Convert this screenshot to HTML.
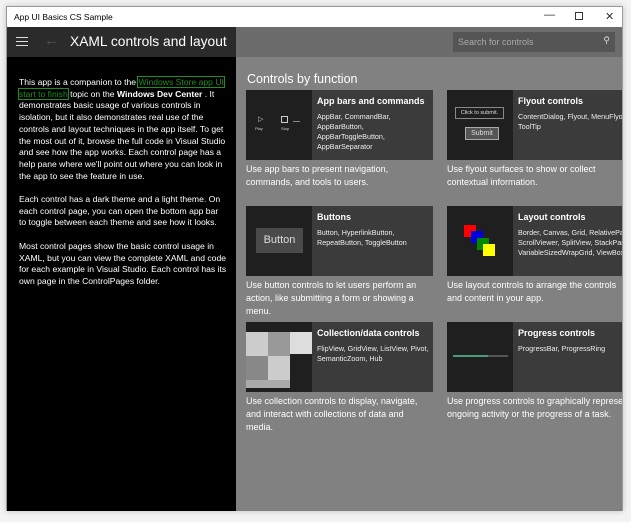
<!DOCTYPE html>
<html><head><style>
*{margin:0;padding:0;box-sizing:border-box}
body{width:631px;height:522px;background:#f3f3f3;font-family:"Liberation Sans",sans-serif;position:relative;overflow:hidden}
.win{position:absolute;left:6px;top:6px;width:617px;height:505px;border:1px solid #9a9a9a;background:#fff;box-shadow:0 0 6px rgba(0,0,0,.2)}
.title{position:absolute;left:7px;top:5px;font-size:8.5px;color:#000}
.cap{position:absolute;top:8px;font-size:11px;color:#333}
.left{position:absolute;left:0;top:20px;width:229px;height:484px;background:#000;overflow:hidden}
.lhead{position:absolute;left:0;top:0;width:229px;height:30px;background:#2b2b2b}
.right{position:absolute;left:229px;top:20px;width:386px;height:484px;background:#818181;overflow:hidden}
.rhead{position:absolute;left:0;top:0;width:386px;height:30px;background:#6c6c6c}
.search{position:absolute;left:217px;top:5px;width:162px;height:20px;background:#555;color:#aaa;font-size:9px;padding:5px 5px}
.ptxt{position:absolute;left:12px;color:#fff;font-size:8.6px;line-height:11.7px;white-space:nowrap}
.tile{position:absolute;height:70px;background:#3b3b3b;overflow:hidden}
.timg{position:absolute;left:0;top:0;width:66px;height:70px;background:#1f1f1f}
.tt{position:absolute;left:71px;top:6px;color:#fff;font-size:9px;font-weight:bold;white-space:nowrap}
.ts{position:absolute;left:71px;top:22px;color:#eee;font-size:7.2px;line-height:10px;white-space:nowrap}
.desc{position:absolute;color:#fff;font-size:9px;line-height:13px;white-space:nowrap}
</style></head><body>
<div class="win">
<div class="title">App UI Basics CS Sample</div>
<div class="cap" style="left:537px;top:2px">&#8212;</div>
<div class="cap" style="left:568px;top:5px;width:8px;height:8px;border:1px solid #333"></div>
<div class="cap" style="left:598px;top:3px">&#10005;</div>
<div class="left">
 <div class="lhead">
  <div style="position:absolute;left:9px;top:10px;width:12px;height:1px;background:#ddd;box-shadow:0 4px 0 #ddd,0 8px 0 #ddd"></div>
  <div style="position:absolute;left:37px;top:5px;color:#555;font-size:15px">&#8592;</div>
  <div style="position:absolute;left:63px;top:7px;color:#fff;font-size:13.8px;white-space:nowrap">XAML controls and layout</div>
 </div>
 <div class="ptxt" style="top:50px">This app is a companion to the <span style="color:#1f8f1f;outline:1px solid #1f8f1f">Windows Store app UI</span><br><span style="color:#1f8f1f;outline:1px solid #1f8f1f">start to finish</span> topic on the <b>Windows Dev Center</b> . It<br>demonstrates basic usage of various controls in<br>isolation, but it also demonstrates real use of the<br>controls and layout techniques in the app itself. To get<br>the most out of it, browse the full code in Visual Studio<br>and see how the app works. Each control page has a<br>help pane where we'll point out where you can look in<br>the app to see the feature in use.</div>
 <div class="ptxt" style="top:167px">Each control has a dark theme and a light theme. On<br>each control page, you can open the bottom app bar<br>to toggle between each theme and see how it looks.</div>
 <div class="ptxt" style="top:214px">Most control pages show the basic control usage in<br>XAML, but you can view the complete XAML and code<br>for each example in Visual Studio. Each control has its<br>own page in the ControlPages folder.</div>
</div>
<div class="right">
 <div class="rhead"><div class="search">Search for controls<span style="position:absolute;right:5px;top:3px;color:#ddd">&#9906;</span></div></div>
 <div style="position:absolute;left:11px;top:45px;color:#fff;font-size:12.5px">Controls by function</div>

 <div class="tile" style="left:10px;top:63px;width:187px"><div class="timg">
  <div style="position:absolute;left:12px;top:25px;color:#ccc;font-size:7px">&#9655;</div><div style="position:absolute;left:9px;top:36px;color:#ccc;font-size:4px">Play</div>
  <div style="position:absolute;left:35px;top:26px;width:7px;height:7px;border:1px solid #ccc"></div><div style="position:absolute;left:35px;top:36px;color:#ccc;font-size:4px">Stop</div>
  <div style="position:absolute;left:47px;top:31px;width:7px;height:1px;background:#888"></div></div>
  <div class="tt">App bars and commands</div><div class="ts">AppBar, CommandBar,<br>AppBarButton,<br>AppBarToggleButton,<br>AppBarSeparator</div></div>
 <div class="desc" style="left:10px;top:136px">Use app bars to present navigation,<br>commands, and tools to users.</div>

 <div class="tile" style="left:211px;top:63px;width:180px"><div class="timg">
  <div style="position:absolute;left:8px;top:17px;width:49px;height:12px;border:1px solid #888;color:#ddd;font-size:5.5px;text-align:center;line-height:10px">Click to submit.</div>
  <div style="position:absolute;left:18px;top:37px;width:34px;height:13px;border:1px solid #aaa;background:#555;color:#ddd;font-size:7px;text-align:center;line-height:11px">Submit</div></div>
  <div class="tt">Flyout controls</div><div class="ts">ContentDialog, Flyout, MenuFlyout,<br>ToolTip</div></div>
 <div class="desc" style="left:211px;top:136px">Use flyout surfaces to show or collect<br>contextual information.</div>

 <div class="tile" style="left:10px;top:179px;width:187px"><div class="timg">
  <div style="position:absolute;left:10px;top:22px;width:47px;height:25px;background:#4a4a4a;color:#ddd;font-size:11px;text-align:center;line-height:25px">Button</div></div>
  <div class="tt">Buttons</div><div class="ts">Button, HyperlinkButton,<br>RepeatButton, ToggleButton</div></div>
 <div class="desc" style="left:10px;top:252px">Use button controls to let users perform an<br>action, like submitting a form or showing a<br>menu.</div>

 <div class="tile" style="left:211px;top:179px;width:180px"><div class="timg">
  <div style="position:absolute;left:17px;top:19px;width:12px;height:12px;background:#f00"></div>
  <div style="position:absolute;left:24px;top:25px;width:12px;height:12px;background:#0000e0"></div>
  <div style="position:absolute;left:30px;top:32px;width:12px;height:12px;background:#080"></div>
  <div style="position:absolute;left:36px;top:38px;width:12px;height:12px;background:#ff0"></div></div>
  <div class="tt">Layout controls</div><div class="ts">Border, Canvas, Grid, RelativePanel,<br>ScrollViewer, SplitView, StackPanel,<br>VariableSizedWrapGrid, ViewBox</div></div>
 <div class="desc" style="left:211px;top:252px">Use layout controls to arrange the controls<br>and content in your app.</div>

 <div class="tile" style="left:10px;top:295px;width:187px"><div class="timg">
  <div style="position:absolute;left:0;top:10px;width:22px;height:24px;background:#ccc"></div>
  <div style="position:absolute;left:22px;top:10px;width:22px;height:24px;background:#999"></div>
  <div style="position:absolute;left:44px;top:10px;width:22px;height:22px;background:#ddd"></div>
  <div style="position:absolute;left:0;top:34px;width:22px;height:24px;background:#888"></div>
  <div style="position:absolute;left:22px;top:34px;width:22px;height:24px;background:#ccc"></div>
  <div style="position:absolute;left:0;top:58px;width:44px;height:8px;background:#aaa"></div></div>
  <div class="tt">Collection/data controls</div><div class="ts">FlipView, GridView, ListView, Pivot,<br>SemanticZoom, Hub</div></div>
 <div class="desc" style="left:10px;top:368px">Use collection controls to display, navigate,<br>and interact with collections of data and<br>media.</div>

 <div class="tile" style="left:211px;top:295px;width:180px"><div class="timg">
  <div style="position:absolute;left:6px;top:33px;width:55px;height:2px;background:#555"></div>
  <div style="position:absolute;left:6px;top:33px;width:35px;height:2px;background:#4a9a7a"></div></div>
  <div class="tt">Progress controls</div><div class="ts">ProgressBar, ProgressRing</div></div>
 <div class="desc" style="left:211px;top:368px">Use progress controls to graphically represent<br>ongoing activity or the progress of a task.</div>
</div>
</div>
</body></html>
